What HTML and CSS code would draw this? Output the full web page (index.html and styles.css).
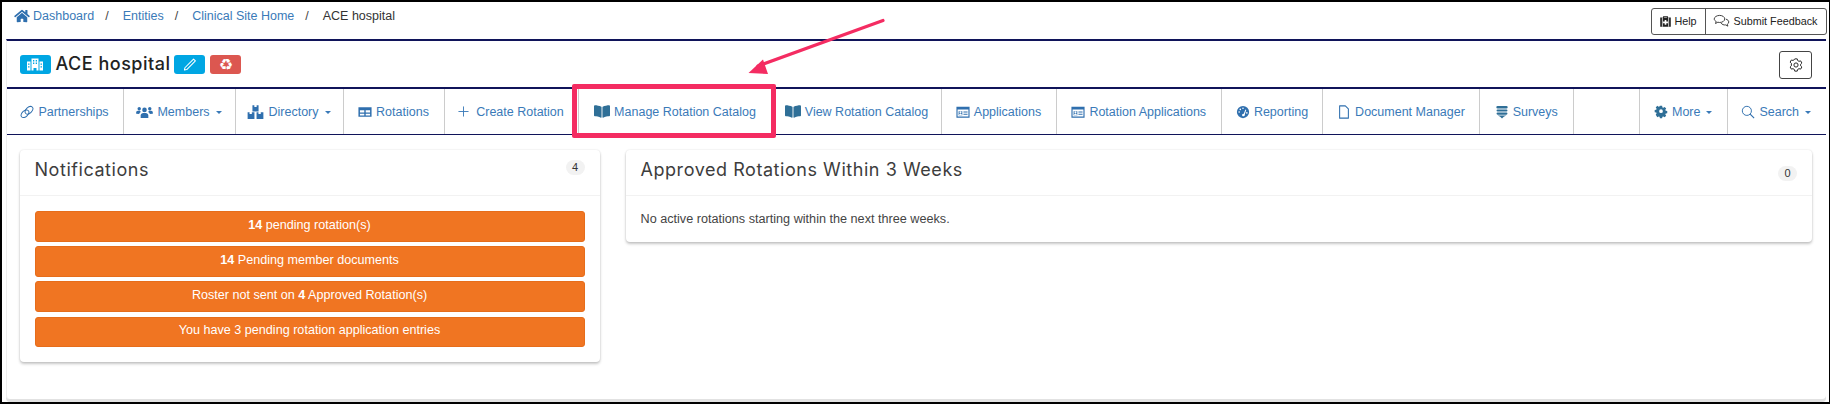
FILE: index.html
```html
<!DOCTYPE html>
<html lang="en">
<head>
<meta charset="utf-8">
<title>ACE hospital</title>
<link rel="stylesheet" href="styles.css">
</head>
<body>
<div class="page">
  <header class="topbar">
    <nav class="crumbs">
      <svg class="home" viewBox="0 0 576 512"><path d="M280.37 148.26L96 300.11V464a16 16 0 0 0 16 16l112.06-.29a16 16 0 0 0 15.92-16V368a16 16 0 0 1 16-16h64a16 16 0 0 1 16 16v95.64a16 16 0 0 0 16 16.05L464 480a16 16 0 0 0 16-16V300L295.67 148.26a12.19 12.19 0 0 0-15.3 0zM571.6 251.47L488 182.56V44.05a12 12 0 0 0-12-12h-56a12 12 0 0 0-12 12v72.61L318.47 43a48 48 0 0 0-61 0L4.34 251.47a12 12 0 0 0-1.6 16.9l25.5 31A12 12 0 0 0 45.15 301l235.22-193.74a12.19 12.19 0 0 1 15.3 0L530.9 301a12 12 0 0 0 16.9-1.6l25.5-31a12 12 0 0 0-1.7-16.93z"/></svg>
      <a class="crumb">Dashboard</a><span class="slash">/</span>
      <a class="crumb">Entities</a><span class="slash">/</span>
      <a class="crumb">Clinical Site Home</a><span class="slash">/</span>
      <span class="crumb-current">ACE hospital</span>
    </nav>
    <div class="help-group">
      <div class="help-btn help-btn-help">
        <svg class="ico-help" viewBox="0 0 16 16"><path d="M5 3V1.5h6V3h3.5v11.5h-13V3zM6.300 3h3.400V2.600H6.300z" fill-rule="evenodd"/><path d="M7 6h2v2h2v2H9v2H7v-2H5V8h2z" fill="#fff"/><path d="M3.600 3h.9v11.500h-.9zM11.500 3h.9v11.500h-.9z" fill="#fff"/></svg>
        Help
      </div>
      <div class="help-btn help-btn-feedback">
        <svg class="ico-feedback" viewBox="0 0 18 15"><path d="M7 1.500c3 0 5.500 1.700 5.500 3.800S10 9.100 7 9.100c-.7 0-1.300-.1-1.900-.3L2.600 10.200l.7-2.200C2 7.300 1.200 6.400 1.200 5.300 1.200 3.200 4 1.500 7 1.500z"/><path d="M13.700 5.500c1.900.5 3.100 1.700 3.100 3.100 0 1-.6 1.800-1.600 2.400l.6 2-2.300-1.300c-2 .3-4.100-.5-5-2"/></svg>
        Submit Feedback
      </div>
    </div>
  </header>

  <main class="panel">
    <section class="title-row">
      <span class="chip chip-blue">
        <svg class="chip-ico" viewBox="0 0 16 12"><path d="M4.500 0h7v12h-2V9.500h-3V12h-2zM6 1.500v1.500h1.300V1.500zm2.700 0v1.500H10V1.500zM6 4v1.500h1.300V4zm2.700 0v1.500H10V4zM0 3h3.500v9H0zm12.500 0H16v9h-3.500zM1 5v1.300h1.500V5zm0 2.700V9h1.500V7.700zM13.500 5v1.300H15V5zm0 2.700V9H15V7.700z" fill-rule="evenodd"/></svg>
      </span>
      <h1 class="site-name">ACE hospital</h1>
      <span class="chip chip-blue chip-edit">
        <svg class="chip-ico" viewBox="0 0 14 14"><path d="M1 13l.5-2.500L10.800 1.200l2 2L3.500 12.500z" fill="none" stroke="#fff" stroke-width="1.100" stroke-linejoin="round"/></svg>
      </span>
      <span class="chip chip-red"><span class="recycle">♻</span></span>
      <span class="spacer"></span>
      <button class="gear-btn" type="button">
        <svg class="ico-gear" viewBox="0 0 16 16"><path d="M6.600 1h2.800l.5 1.900 1.500.9 1.900-.5 1.400 2.400-1.400 1.400v1.800l1.400 1.400-1.400 2.400-1.900-.5-1.500.9-.5 1.900H6.600l-.5-1.900-1.500-.9-1.900.5-1.400-2.400 1.400-1.400V6.100L1.300 4.700l1.400-2.400 1.900.5 1.500-.9z" fill="none" stroke="#222" stroke-width="1.100" stroke-linejoin="round"/><circle cx="8" cy="8" r="2.400" fill="none" stroke="#222" stroke-width="1.100"/></svg>
      </button>
    </section>

    <nav class="tabs">
      <a class="tab">
        <svg class="ico" viewBox="0 0 16 16"><g fill="none" stroke="currentColor" stroke-width="1.100"><ellipse cx="5.700" cy="10" rx="5.200" ry="3.300" transform="rotate(-45 5.700 10)"/><ellipse cx="10.300" cy="6" rx="5.200" ry="3.300" transform="rotate(-45 10.300 6)"/></g></svg>
        Partnerships
      </a>
      <a class="tab">
        <svg class="ico ico-wide" viewBox="0 0 20 16"><circle cx="10" cy="5.500" r="2.700"/><path d="M5.500 15v-2.800c0-2 1.500-3 3-3h3c1.500 0 3 1 3 3V15z"/><circle cx="3.800" cy="4.200" r="2"/><circle cx="16.200" cy="4.200" r="2"/><path d="M.2 10V8.500c0-1 .9-1.900 2-1.900h2.400c.3.600.8 1.200 1.300 1.500-1.100.5-1.900 1.300-2.100 2.300zM19.800 10V8.500c0-1-.9-1.900-2-1.900h-2.400c-.3.600-.8 1.200-1.300 1.500 1.100.5 1.900 1.300 2.100 2.300z"/></svg>
        Members<i class="caret"></i>
      </a>
      <a class="tab">
        <svg class="ico ico-wide" viewBox="0 0 18 16"><path d="M5.500 0h2.200v2h2.600V0h2.200v7h-7zM0 8h2.200v2h2.600V8H7.800v7.500H0zM10.200 8h2.200v2H15V8h3v7.500h-7.800z" transform="translate(0 .4)"/></svg>
        Directory<i class="caret"></i>
      </a>
      <a class="tab">
        <svg class="ico" viewBox="0 0 16 16"><path d="M.5 2.500h15v11H.5zM2.200 6v2.500h5V6zm6.600 0v2.500h5V6zM2.200 10v2h5v-2zm6.600 0v2h5v-2z" fill-rule="evenodd"/></svg>
        Rotations
      </a>
      <a class="tab tab-create">
        <svg class="ico ico-plus" viewBox="0 0 12 12"><path d="M6 .5v11M.5 6h11" fill="none" stroke="currentColor" stroke-width="1"/></svg>
        Create Rotation
      </a>
      <a class="tab">
        <svg class="ico ico-book" viewBox="0 0 576 512"><path d="M542.220 32.050c-54.800 3.110-163.720 14.430-230.960 55.590-4.640 2.840-7.270 7.890-7.270 13.170v363.870c0 11.550 12.630 18.850 23.280 13.490 69.180-34.820 169.230-44.320 218.700-46.920 16.890-.89 30.020-14.430 30.020-30.660V62.750c.01-17.710-15.350-31.740-33.770-30.700zM264.730 87.640C197.500 46.480 88.580 35.170 33.780 32.050 15.360 31.010 0 45.040 0 62.750V400.600c0 16.240 13.130 29.780 30.020 30.670 49.490 2.600 149.590 12.110 218.770 46.950 10.620 5.350 23.210-1.940 23.210-13.460V100.630c0-5.290-2.620-10.140-7.270-12.990z"/></svg>
        Manage Rotation Catalog
      </a>
      <a class="tab">
        <svg class="ico ico-book" viewBox="0 0 576 512"><path d="M542.220 32.050c-54.800 3.110-163.720 14.430-230.960 55.590-4.640 2.840-7.270 7.890-7.270 13.170v363.870c0 11.550 12.630 18.850 23.280 13.490 69.180-34.820 169.230-44.320 218.700-46.920 16.890-.89 30.020-14.430 30.020-30.660V62.750c.01-17.710-15.350-31.740-33.770-30.700zM264.730 87.640C197.500 46.480 88.580 35.170 33.780 32.050 15.360 31.010 0 45.040 0 62.750V400.600c0 16.240 13.130 29.780 30.020 30.670 49.490 2.600 149.590 12.110 218.770 46.950 10.620 5.350 23.210-1.940 23.210-13.460V100.630c0-5.290-2.620-10.140-7.270-12.990z"/></svg>
        View Rotation Catalog
      </a>
      <a class="tab">
        <svg class="ico" viewBox="0 0 16 16"><path d="M.5 2h15v12.500H.5zM1.800 5v8.200h12.400V5zM3 7h4.200v4.800H3zM8.500 7.500h4.700v1.200H8.500zM8.500 10h4.700v1.200H8.500z" fill-rule="evenodd"/><circle cx="5.100" cy="8.300" r="1.200" fill="#fff"/><path d="M3.500 11.500c0-1 .7-1.700 1.600-1.700s1.600.7 1.600 1.700z" fill="#fff"/></svg>
        Applications
      </a>
      <a class="tab">
        <svg class="ico" viewBox="0 0 16 16"><path d="M.5 2h15v12.500H.5zM1.800 5v8.200h12.400V5zM3 7h4.200v4.800H3zM8.500 7.500h4.700v1.200H8.500zM8.500 10h4.700v1.200H8.500z" fill-rule="evenodd"/><circle cx="5.100" cy="8.300" r="1.200" fill="#fff"/><path d="M3.500 11.500c0-1 .7-1.700 1.600-1.700s1.600.7 1.600 1.700z" fill="#fff"/></svg>
        Rotation Applications
      </a>
      <a class="tab">
        <svg class="ico" viewBox="0 0 16 16"><path d="M8 1a7 7 0 1 1 0 14A7 7 0 0 1 8 1zM7.200 12.500a1.800 1.800 0 0 0 2.900-1.900l1.600-5-1-.4-1.800 4.900a1.800 1.800 0 0 0-1.700 2.400z" fill-rule="evenodd"/><g fill="#fff"><circle cx="8" cy="3.800" r=".9"/><circle cx="4.900" cy="5" r=".9"/><circle cx="3.600" cy="8" r=".9"/><circle cx="12.400" cy="9" r=".9"/></g></svg>
        Reporting
      </a>
      <a class="tab">
        <svg class="ico" viewBox="0 0 16 16"><path d="M3 1h6.500L13 4.500V15H3z" fill="none" stroke="currentColor" stroke-width="1.200" stroke-linejoin="round"/></svg>
        Document Manager
      </a>
      <a class="tab">
        <svg class="ico" viewBox="0 0 16 16"><path d="M3 1h10a1 1 0 0 1 0 3H3a1 1 0 0 1 0-3zM3 5h10a1 1 0 0 1 0 2.500H3A1 1 0 0 1 3 5zM3 8.500h10a1 1 0 0 1 0 2.500H3a1 1 0 0 1 0-2.500zM3 12h10l-3 1.500L8 15.500 6 13.500z" fill="#2f6f97"/></svg>
        Surveys
      </a>
      <span class="tab"></span>
      <a class="tab tab-more">
        <svg class="ico" viewBox="0 0 16 16"><path d="M6.500.8h3l.4 2.100 1.200.5 1.800-1.200 2.100 2.100-1.200 1.800.5 1.200 2.100.4v3l-2.100.4-.5 1.200 1.200 1.800-2.100 2.100-1.800-1.200-1.200.5-.4 2.100h-3l-.4-2.100-1.200-.5-1.800 1.200L.9 12.700l1.200-1.800-.5-1.200L-.5 9.300v-3l2.100-.4.5-1.200L.9 2.900 3 .8l1.800 1.200 1.200-.5zM8 5.500a2.500 2.500 0 1 0 0 5 2.500 2.500 0 0 0 0-5z" fill="#2f6f97" fill-rule="evenodd" transform="translate(1.200 .3) scale(.85)"/></svg>
        More<i class="caret"></i>
      </a>
      <a class="tab tab-last">
        <svg class="ico" viewBox="0 0 16 16"><circle cx="6.700" cy="6.700" r="5.200" fill="none" stroke="currentColor" stroke-width="1.100"/><path d="M10.500 10.500l4.500 4.500" stroke="currentColor" stroke-width="1.300"/></svg>
        Search<i class="caret"></i>
      </a>
    </nav>

    <div class="content">
      <section class="card card-notes">
        <header class="card-head">
          <h2 class="card-title">Notifications</h2>
          <span class="badge">4</span>
        </header>
        <div class="card-body">
          <a class="notice"><b>14</b> pending rotation(s)</a>
          <a class="notice"><b>14</b> Pending member documents</a>
          <a class="notice">Roster not sent on <b>4</b> Approved Rotation(s)</a>
          <a class="notice">You have 3 pending rotation application entries</a>
        </div>
      </section>
      <section class="card card-approved">
        <header class="card-head">
          <h2 class="card-title">Approved Rotations Within 3 Weeks</h2>
          <span class="badge badge-low">0</span>
        </header>
        <div class="card-body">
          <p class="empty">No active rotations starting within the next three weeks.</p>
        </div>
      </section>
    </div>
  </main>
</div>

<div class="highlight"></div>
<svg class="arrow" viewBox="0 0 1830 404">
  <path d="M883 20.500L758 66" stroke="#f42c62" stroke-width="3.200" stroke-linecap="round" fill="none"/>
  <path d="M748.500 73L763 59.500 768 74z" fill="#f42c62"/>
</svg>
</body>
</html>
```
FILE: styles.css
```css
* { box-sizing: border-box; }
html, body { margin: 0; height: 404px; overflow: hidden; }
body {
  position: relative;
  background: #000;
  padding: 2px 1.500px 2.500px 2px;
  font-family: "Liberation Sans", Arial, sans-serif;
  font-size: 12.500px;
  color: #333;
}
.page {
  height: 100%;
  background: #fff;
  display: flex;
  flex-direction: column;
  padding: 0 0 0 3.500px;
}

/* top bar */
.topbar { height: 37px; display: flex; justify-content: space-between; align-items: flex-start; padding-right: 2px; }
.crumbs { display: flex; align-items: center; height: 27px; padding-left: 8.500px; color: #3a7ab8; }
.home { width: 16px; height: 14px; fill: #2f6fae; margin-right: 3px; }
.crumb { color: #3a7ab8; }
.slash { color: #444; margin: 0 14px 0 11px; }
.crumb-current { color: #333; }
.help-group {
  display: flex;
  margin-top: 6px;
  height: 26.500px;
  border: 1px solid #555;
  border-radius: 3px;
  font-size: 10.800px;
  color: #222;
}
.help-btn { display: flex; align-items: center; justify-content: center; }
.help-btn-help { width: 54px; border-right: 1px solid #555; }
.help-btn-feedback { width: 120px; }
.ico-help { width: 13px; height: 13px; margin-right: 2px; fill: #222; }
.ico-feedback { width: 17px; height: 14px; margin-right: 3px; fill: none; stroke: #333; stroke-width: 1; }

/* main panel */
.panel {
  flex: 1;
  margin-right: 2.500px;
  border-top: 2px solid #10145a;
  border-left: 1px solid #eee;
  border-radius: 0 0 4px 4px;
  box-shadow: 0 3px 0 #e2e2e2;
  margin-bottom: 3px;
}
.title-row { height: 46px; display: flex; align-items: center; padding: 0 14px 0 13px; border-bottom: 2px solid #10145a; box-sizing: content-box; }
.chip {
  width: 31px;
  height: 19px;
  border-radius: 3px;
  display: flex;
  align-items: center;
  justify-content: center;
  flex: none;
  margin-top: 1px;
}
.chip-blue { background: #00a6e3; }
.chip-red { background: #dc5750; }
.chip-edit { margin-right: 5px; }
.chip-ico { height: 13px; width: 16px; fill: #fff; }
.recycle { font-family: "DejaVu Sans", sans-serif; font-size: 16px; line-height: 19px; color: #fff; }
.site-name {
  margin: 0 4px 0 5px;
  font-family: Inter, sans-serif;
  font-weight: 500;
  font-size: 18px;
  color: #222;
  letter-spacing: .5px;
  line-height: 1;
}
.spacer { flex: 1; }
.gear-btn {
  width: 33px;
  height: 28px;
  padding: 0;
  background: #fff;
  border: 1px solid #444;
  border-radius: 3px;
  display: flex;
  align-items: center;
  justify-content: center;
  margin-top: 1px;
}
.ico-gear { width: 14px; height: 14px; }

/* tabs */
.tabs {
  display: grid;
  grid-template-columns: 117px 112px 108px 101px 134px 194px 169px 115px 165.500px 101px 157px 93.500px 66.500px 87.500px 97.500px;
  height: 46px;
  border-bottom: 1px solid #10145a;
}
.tab {
  display: flex;
  align-items: center;
  justify-content: center;
  color: #3a7ab8;
  border-right: 1px solid #ccc;
  white-space: nowrap;
  font-size: 12.500px;
}
.tab-last { border-right: 0; }
.ico { width: 14px; height: 14px; margin-right: 4px; fill: #2f6fae; color: #2f6fae; flex: none; }
.ico-wide { width: 17px; }
.ico-plus { width: 11px; height: 11px; margin-right: 7px; color: #3a7ab8; }
.ico-book { width: 16px; height: 15px; fill: #2f6f97; }
.caret {
  display: inline-block;
  margin-left: 6px;
  border-top: 3.500px solid #3a7ab8;
  border-left: 3.500px solid transparent;
  border-right: 3.500px solid transparent;
  margin-top: 2px;
}

/* cards */
.content { display: flex; align-items: flex-start; gap: 26px; padding: 15px 14px 0 13px; }
.card {
  background: #fff;
  border-radius: 4px;
  box-shadow: 0 0 2px rgba(0,0,0,.12), 0 2px 3px rgba(0,0,0,.22);
}
.card-notes { width: 580px; flex: none; }
.card-approved { flex: 1; }
.card-head {
  height: 46px;
  padding: 0 15px;
  border-bottom: 1px solid #f2f2f2;
  display: flex;
  justify-content: space-between;
  align-items: flex-start;
}
.card-title {
  margin: 8px 0 0;
  font-family: Inter, sans-serif;
  font-weight: 400;
  font-size: 18px;
  line-height: 24px;
  letter-spacing: .55px;
  color: #3d3d3d;
}
.badge {
  min-width: 19px;
  height: 15px;
  margin-top: 10px;
  border-radius: 8px;
  background: #f2f2f2;
  color: #333;
  font-size: 11px;
  line-height: 14px;
  text-align: center;
}
.badge-low { margin-top: 16px; }
.card-body { padding: 15px; }
.notice {
  display: block;
  height: 30.700px;
  margin-bottom: 4.500px;
  padding-top: 4.500px;
  border: 1px solid #e66d1b;
  border-radius: 3px;
  background: #f07522;
  color: #fff;
  font-size: 12.600px;
  line-height: 17px;
  text-align: center;
}
.notice:last-child { margin-bottom: 0; }
.empty { margin: 0; font-size: 12.650px; line-height: 16px; color: #444; }

/* annotations lying over the screenshot */
.highlight {
  position: absolute;
  left: 572px;
  top: 84px;
  width: 204px;
  height: 54px;
  border: 5px solid #f42c62;
  border-radius: 2px;
}
.arrow { position: absolute; left: 0; top: 0; width: 1830px; height: 404px; pointer-events: none; }
```
